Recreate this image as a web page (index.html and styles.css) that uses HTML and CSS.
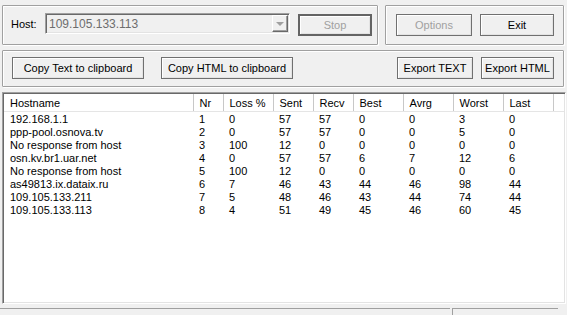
FILE: index.html
```html
<!DOCTYPE html>
<html lang="en">
<head>
    <meta charset="UTF-8">
    <title>WinMTR</title>
    <link rel="stylesheet" href="styles.css">
</head>
<body>

<div class="top-row">
    <div class="group host-group">
        <span class="host-label">Host:</span>
        <div class="combo">
            <span class="combo-text">109.105.133.113</span>
            <span class="combo-button"><span class="arrow"></span></span>
        </div>
        <button class="btn btn-default stop" disabled>Stop</button>
    </div>
    <div class="group side-group">
        <button class="btn options" disabled>Options</button>
        <button class="btn exit">Exit</button>
    </div>
</div>

<div class="group copy-group">
    <button class="btn wide">Copy Text to clipboard</button>
    <button class="btn wide">Copy HTML to clipboard</button>
    <div class="spacer"></div>
    <button class="btn options">Export TEXT</button>
    <button class="btn exit">Export HTML</button>
</div>

<div class="list">
    <table>
        <colgroup>
            <col class="c-host">
            <col class="c-nr">
            <col class="c-loss">
            <col class="c-sent">
            <col class="c-recv">
            <col class="c-best">
            <col class="c-avrg">
            <col class="c-worst">
            <col class="c-last">
            <col>
        </colgroup>
        <thead>
            <tr>
                <th>Hostname</th><th>Nr</th><th>Loss %</th><th>Sent</th><th>Recv</th><th>Best</th><th>Avrg</th><th>Worst</th><th>Last</th><th class="rest"></th>
            </tr>
        </thead>
        <tbody id="rows"></tbody>
    </table>
</div>

<div class="status">
    <div class="panel main"></div>
    <div class="panel small"></div>
</div>

<script>
    const hops = [
        ["192.168.1.1", 1, 0, 57, 57, 0, 0, 3, 0],
        ["ppp-pool.osnova.tv", 2, 0, 57, 57, 0, 0, 5, 0],
        ["No response from host", 3, 100, 12, 0, 0, 0, 0, 0],
        ["osn.kv.br1.uar.net", 4, 0, 57, 57, 6, 7, 12, 6],
        ["No response from host", 5, 100, 12, 0, 0, 0, 0, 0],
        ["as49813.ix.dataix.ru", 6, 7, 46, 43, 44, 46, 98, 44],
        ["109.105.133.211", 7, 5, 48, 46, 43, 44, 74, 44],
        ["109.105.133.113", 8, 4, 51, 49, 45, 46, 60, 45]
    ];

    const tbody = document.getElementById("rows");
    hops.forEach(hop => {
        const tr = document.createElement("tr");
        tr.innerHTML = hop.map(v => `<td>${v}</td>`).join("") + "<td></td>";
        tbody.appendChild(tr);
    });
</script>

</body>
</html>
```

FILE: styles.css
```css
body {
    margin: 0;
    background-color: #f0f0f0;
    font-family: "Liberation Sans", Arial, sans-serif;
    font-size: 11px;
    color: #000;
    width: 567px;
    height: 315px;
    overflow: hidden;
}
.group {
    box-sizing: border-box;
    border: 1px solid #a0a0a0;
    box-shadow: inset 1px 1px 0 #fff, 1px 1px 0 #fff;
    border-radius: 1px;
}
.top-row {
    display: flex;
    margin: 5px 0 0 2px;
    gap: 7px;
}
.host-group {
    width: 376px;
    height: 40px;
    display: flex;
    align-items: flex-start;
    padding: 7px 0 0 8px;
}
.host-label {
    margin-top: 5px;
    width: 34px;
}
.combo {
    box-sizing: border-box;
    width: 245px;
    height: 21px;
    display: flex;
    align-items: center;
    border: 1px solid;
    border-color: #a0a0a0 #fff #fff #a0a0a0;
    box-shadow: inset 1px 1px 0 #696969, inset -1px -1px 0 #e3e3e3;
    background: #f0f0f0;
}
.combo-text {
    flex: 1;
    padding-left: 3px;
    color: #6d6d6d;
    font-size: 12px;
}
.combo-button {
    box-sizing: border-box;
    width: 16px;
    height: 17px;
    margin-right: 1px;
    border: 1px solid;
    border-color: #fff #696969 #696969 #fff;
    box-shadow: inset -1px -1px 0 #a0a0a0;
    display: flex;
    align-items: center;
    justify-content: center;
}
.arrow {
    width: 0;
    height: 0;
    border-left: 4px solid transparent;
    border-right: 4px solid transparent;
    border-top: 4px solid #a0a0a0;
}
.btn {
    box-sizing: border-box;
    height: 22px;
    padding: 0;
    font-family: "Liberation Sans", Arial, sans-serif;
    font-size: 11px;
    color: #000;
    background: #f0f0f0;
    border: 1px solid #707070;
    box-shadow: inset 1px 1px 0 #fff, inset -1px -1px 0 #e3e3e3;
    border-radius: 0;
}
.btn:disabled {
    color: #a0a0a0;
}
.btn-default {
    border: 2px solid #646464;
}
.stop {
    width: 74px;
    margin: 1px 0 0 8px;
    height: 22px;
}
.side-group {
    width: 179px;
    height: 40px;
    display: flex;
    align-items: flex-start;
    padding: 8px 0 0 10px;
    gap: 8px;
}
.options {
    width: 76px;
}
.exit {
    width: 74px;
}
.copy-group {
    margin: 5px 0 0 2px;
    width: 562px;
    height: 37px;
    display: flex;
    align-items: flex-start;
    padding: 6px 9px 0 9px;
}
.copy-group .wide {
    width: 132px;
    margin-right: 17px;
}
.copy-group .options {
    margin-right: 8px;
}
.copy-group .exit {
    width: 73px;
}
.spacer {
    flex: 1;
}
.list {
    box-sizing: border-box;
    margin: 5px 0 0 2px;
    width: 564px;
    height: 212px;
    background: #fff;
    border: 1px solid;
    border-color: #a0a0a0 #fff #fff #a0a0a0;
    box-shadow: inset 1px 1px 0 #696969, inset -1px -1px 0 #e3e3e3;
    padding: 1px 1px 0 1px;
    overflow: hidden;
}
table {
    border-collapse: collapse;
    table-layout: fixed;
    width: 560px;
}
.c-host { width: 189px; }
.c-nr { width: 30px; }
.c-loss { width: 50px; }
.c-sent { width: 40px; }
.c-recv { width: 40px; }
.c-best { width: 50px; }
.c-avrg { width: 50px; }
.c-worst { width: 50px; }
.c-last { width: 50px; }
th {
    height: 17px;
    padding: 0 0 0 6px;
    font-weight: normal;
    text-align: left;
    white-space: nowrap;
    background: #fff;
    border-right: 1px solid #c8c8c8;
    border-bottom: 1px solid #e5e5e5;
}
th.rest {
    border-right: none;
}
td {
    height: 13px;
    line-height: 13px;
    padding: 0 0 0 6px;
    white-space: nowrap;
    overflow: hidden;
}
tbody tr:first-child td {
    padding-top: 1px;
}
.status {
    display: flex;
    margin-top: 4px;
    gap: 2px;
}
.panel {
    height: 10px;
    border-top: 1px solid #a0a0a0;
    border-left: 1px solid #a0a0a0;
}
.panel.main {
    width: 450px;
    border-left: none;
}
.panel.small {
    width: 105px;
}
```
